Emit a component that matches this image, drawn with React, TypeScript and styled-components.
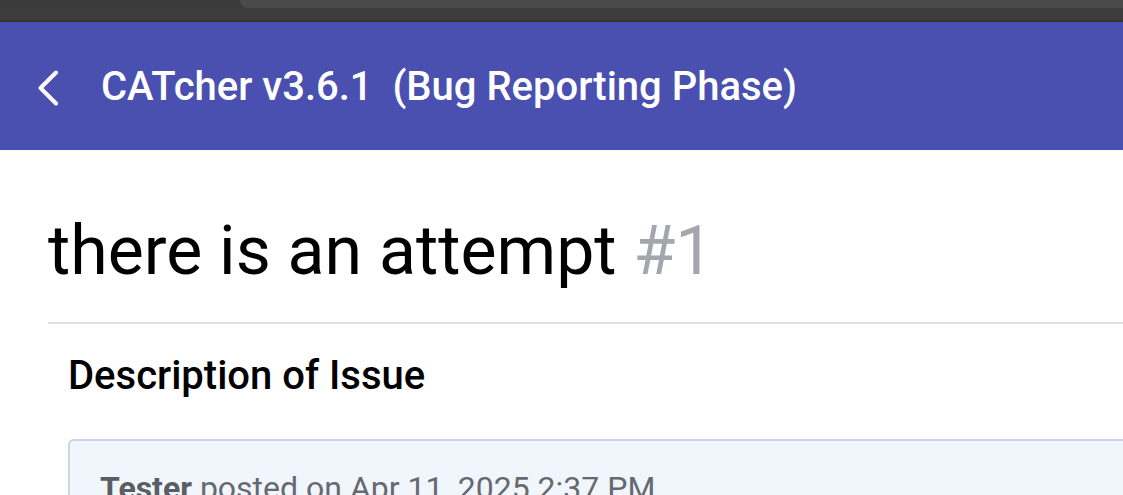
import React from "react";
import styled, { createGlobalStyle } from "styled-components";

const GlobalStyle = createGlobalStyle`
  html, body {
    margin: 0;
    padding: 0;
    background: #fff;
    font-family: Roboto, "Noto Sans", sans-serif;
    overflow: hidden;
  }
`;

export default function App() {
  return (
    <>
      <GlobalStyle />
      <Chrome>
        <ChromeTabStrip>
          <ChromeTab />
        </ChromeTabStrip>
        <ChromeBar />
      </Chrome>
      <Toolbar>
        <BackButton aria-label="Back">
          <svg width="24" height="36" viewBox="0 0 24 36" fill="none">
            <path d="M20 2.5 L4.5 18 L20 33.5" stroke="#fff" strokeWidth="4" strokeLinecap="round" strokeLinejoin="round" />
          </svg>
        </BackButton>
        <AppTitle>CATcher v3.6.1&nbsp; (Bug Reporting Phase)</AppTitle>
      </Toolbar>
      <Content>
        <IssueTitle>
          there is an attempt <IssueNumber>#1</IssueNumber>
        </IssueTitle>
        <Divider />
        <Section>
          <SectionTitle>Description of Issue</SectionTitle>
          <CommentCard>
            <CommentHeader>
              <Author>Tester</Author> posted on Apr 11, 2025 2:37 PM
            </CommentHeader>
          </CommentCard>
        </Section>
      </Content>
    </>
  );
}

const Chrome = styled.div`
  height: 22px;
  display: flex;
  flex-direction: column;
  background: #3b3b3b;
`;

const ChromeTabStrip = styled.div`
  height: 8px;
  background: #3b3b3b;
  display: flex;
`;

const ChromeTab = styled.div`
  margin-left: 240px;
  flex: 1;
  background: #4a4a4a;
  border-bottom-left-radius: 12px;
`;

const ChromeBar = styled.div`
  height: 12px;
  background: #3c3c3c;
  border-bottom: 2px solid #333;
`;

const Toolbar = styled.header`
  height: 128px;
  background: #4a50b0;
  display: flex;
  align-items: center;
  padding-left: 36px;
`;

const BackButton = styled.button`
  background: none;
  border: none;
  padding: 0;
  width: 26px;
  height: 36px;
  display: flex;
  align-items: center;
  margin-right: 39px;
  margin-top: 4px;
  cursor: pointer;
`;

const AppTitle = styled.h1`
  margin: 0;
  color: #fff;
  font-size: 40px;
  font-weight: 500;
  white-space: pre;
`;

const Content = styled.main`
  padding: 56px 0 0 48px;
`;

const IssueTitle = styled.h2`
  margin: 0;
  font-size: 68px;
  font-weight: 400;
  line-height: 90px;
  color: #000;
`;

const IssueNumber = styled.span`
  color: #a3a7ad;
`;

const Divider = styled.hr`
  margin: 26px 0 0;
  border: none;
  border-top: 2px solid #e0e0e0;
`;

const Section = styled.section`
  padding: 28px 0 0 20px;
`;

const SectionTitle = styled.h3`
  margin: 0;
  font-size: 40px;
  font-weight: 500;
  line-height: 48px;
  color: #000;
`;

const CommentCard = styled.div`
  margin-top: 39px;
  background: #f1f6fd;
  border: 2px solid #c8d5ec;
  border-right: none;
  border-radius: 6px 0 0 0;
  height: 200px;
  padding: 28px 30px;
`;

const CommentHeader = styled.div`
  font-size: 32px;
  color: #666a70;
`;

const Author = styled.span`
  font-weight: 700;
  color: #5a5e64;
`;
